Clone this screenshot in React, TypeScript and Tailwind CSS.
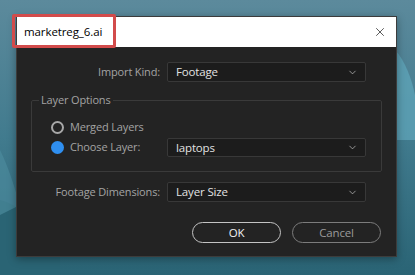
import React from 'react';
import { X, ChevronDown } from 'lucide-react';

const font = { fontFamily: '"Open Sans", "Noto Sans", Arial, sans-serif' };

const Select = ({ value, h = 'h-[20px]' }: { value: string; h?: string }) => (
  <div className={`w-[199px] ${h} bg-[#1c1c1c] border border-[#383838] rounded-[2px] flex items-center justify-between pl-[8px] pr-[7px]`}>
    <span className="text-[11.5px] text-[#e2e2e2] leading-none tracking-[-0.15px]">{value}</span>
    <ChevronDown size={11} strokeWidth={1.5} className="text-[#c8c8c8]" />
  </div>
);

export default function App() {
  return (
    <div className="relative w-[415px] h-[275px] overflow-hidden bg-gradient-to-b from-[#5c8a9c] via-[#417b8e] to-[#2a6475]" style={font}>
      {/* wallpaper shapes */}
      <svg className="absolute inset-0" width="415" height="275" viewBox="0 0 415 275">
        <path d="M395 50 C 405 60, 412 80, 415 95 L415 140 L395 140 Z" fill="#5ea3b6" opacity="0.8" />
        <path d="M0 200 C 20 205, 40 225, 60 240 L60 275 L0 275 Z" fill="#2a6474" />
        <path d="M0 150 C 10 170, 15 190, 20 205 L0 215 Z" fill="#4b8a9c" opacity="0.7" />
      </svg>

      <div className="relative pt-[16px] pl-[16px]">
        <div className="w-[381px] h-[241px] flex flex-col shadow-[0_2px_8px_rgba(0,0,0,0.35)] border border-[#3c3c3c]">
          {/* title bar */}
          <div className="h-[30px] bg-white flex items-center justify-between pl-[7px] pr-[9px] shrink-0">
            <span className="text-[11.5px] text-black tracking-[-0.1px]">marketreg_6.ai</span>
            <X size={14} strokeWidth={1.1} className="text-black" />
          </div>

          {/* body */}
          <div className="flex-1 bg-[#232323] flex flex-col pt-[15px] pl-[14px] text-[11px] tracking-[-0.15px]">
            <div className="flex items-center">
              <span className="w-[136px] text-right text-[#a3a3a3] pr-[7px] whitespace-nowrap">Import Kind:</span>
              <Select value="Footage" />
            </div>

            <fieldset className="mt-[10px] w-[351px] h-[80px] border border-[#3a3a3a] rounded-[2px] pl-[7px]">
              <legend className="px-[2px] text-[#a3a3a3] leading-[16px]">Layer Options</legend>
              <div className="flex items-center mt-[11px] h-[16px] ml-[12px]">
                <span className="w-[13px] h-[13px] rounded-full border-2 border-[#a8a8a8] mr-[6px]" />
                <span className="text-[#a3a3a3]">Merged Layers</span>
              </div>
              <div className="flex items-center mt-[3px] ml-[12px]">
                <span className="w-[13px] h-[13px] rounded-full bg-[#2f8ff0] mr-[6px]" />
                <span className="w-[97px] text-[#a3a3a3]">Choose Layer:</span>
                <Select value="laptops" h="h-[19px]" />
              </div>
            </fieldset>

            <div className="flex items-center mt-[10px]">
              <span className="w-[136px] text-right text-[#a3a3a3] pr-[7px] whitespace-nowrap">Footage Dimensions:</span>
              <Select value="Layer Size" />
            </div>

            <div className="flex justify-end gap-[11px] mt-[20px] pr-[15px]">
              <button className="w-[89px] h-[21px] rounded-full border-[1.5px] border-[#c4c4c4] text-[#f0f0f0] text-[11.5px] leading-none">OK</button>
              <button className="w-[89px] h-[21px] rounded-full border-[1.5px] border-[#7c7c7c] text-[#9a9a9a] text-[11.5px] leading-none">Cancel</button>
            </div>
          </div>
        </div>

        {/* highlight annotation over title */}
        <div className="absolute left-[12px] top-[14px] w-[104px] h-[34px] border-[3px] border-[#d24b4b] rounded-[2px]" />
      </div>
    </div>
  );
}
